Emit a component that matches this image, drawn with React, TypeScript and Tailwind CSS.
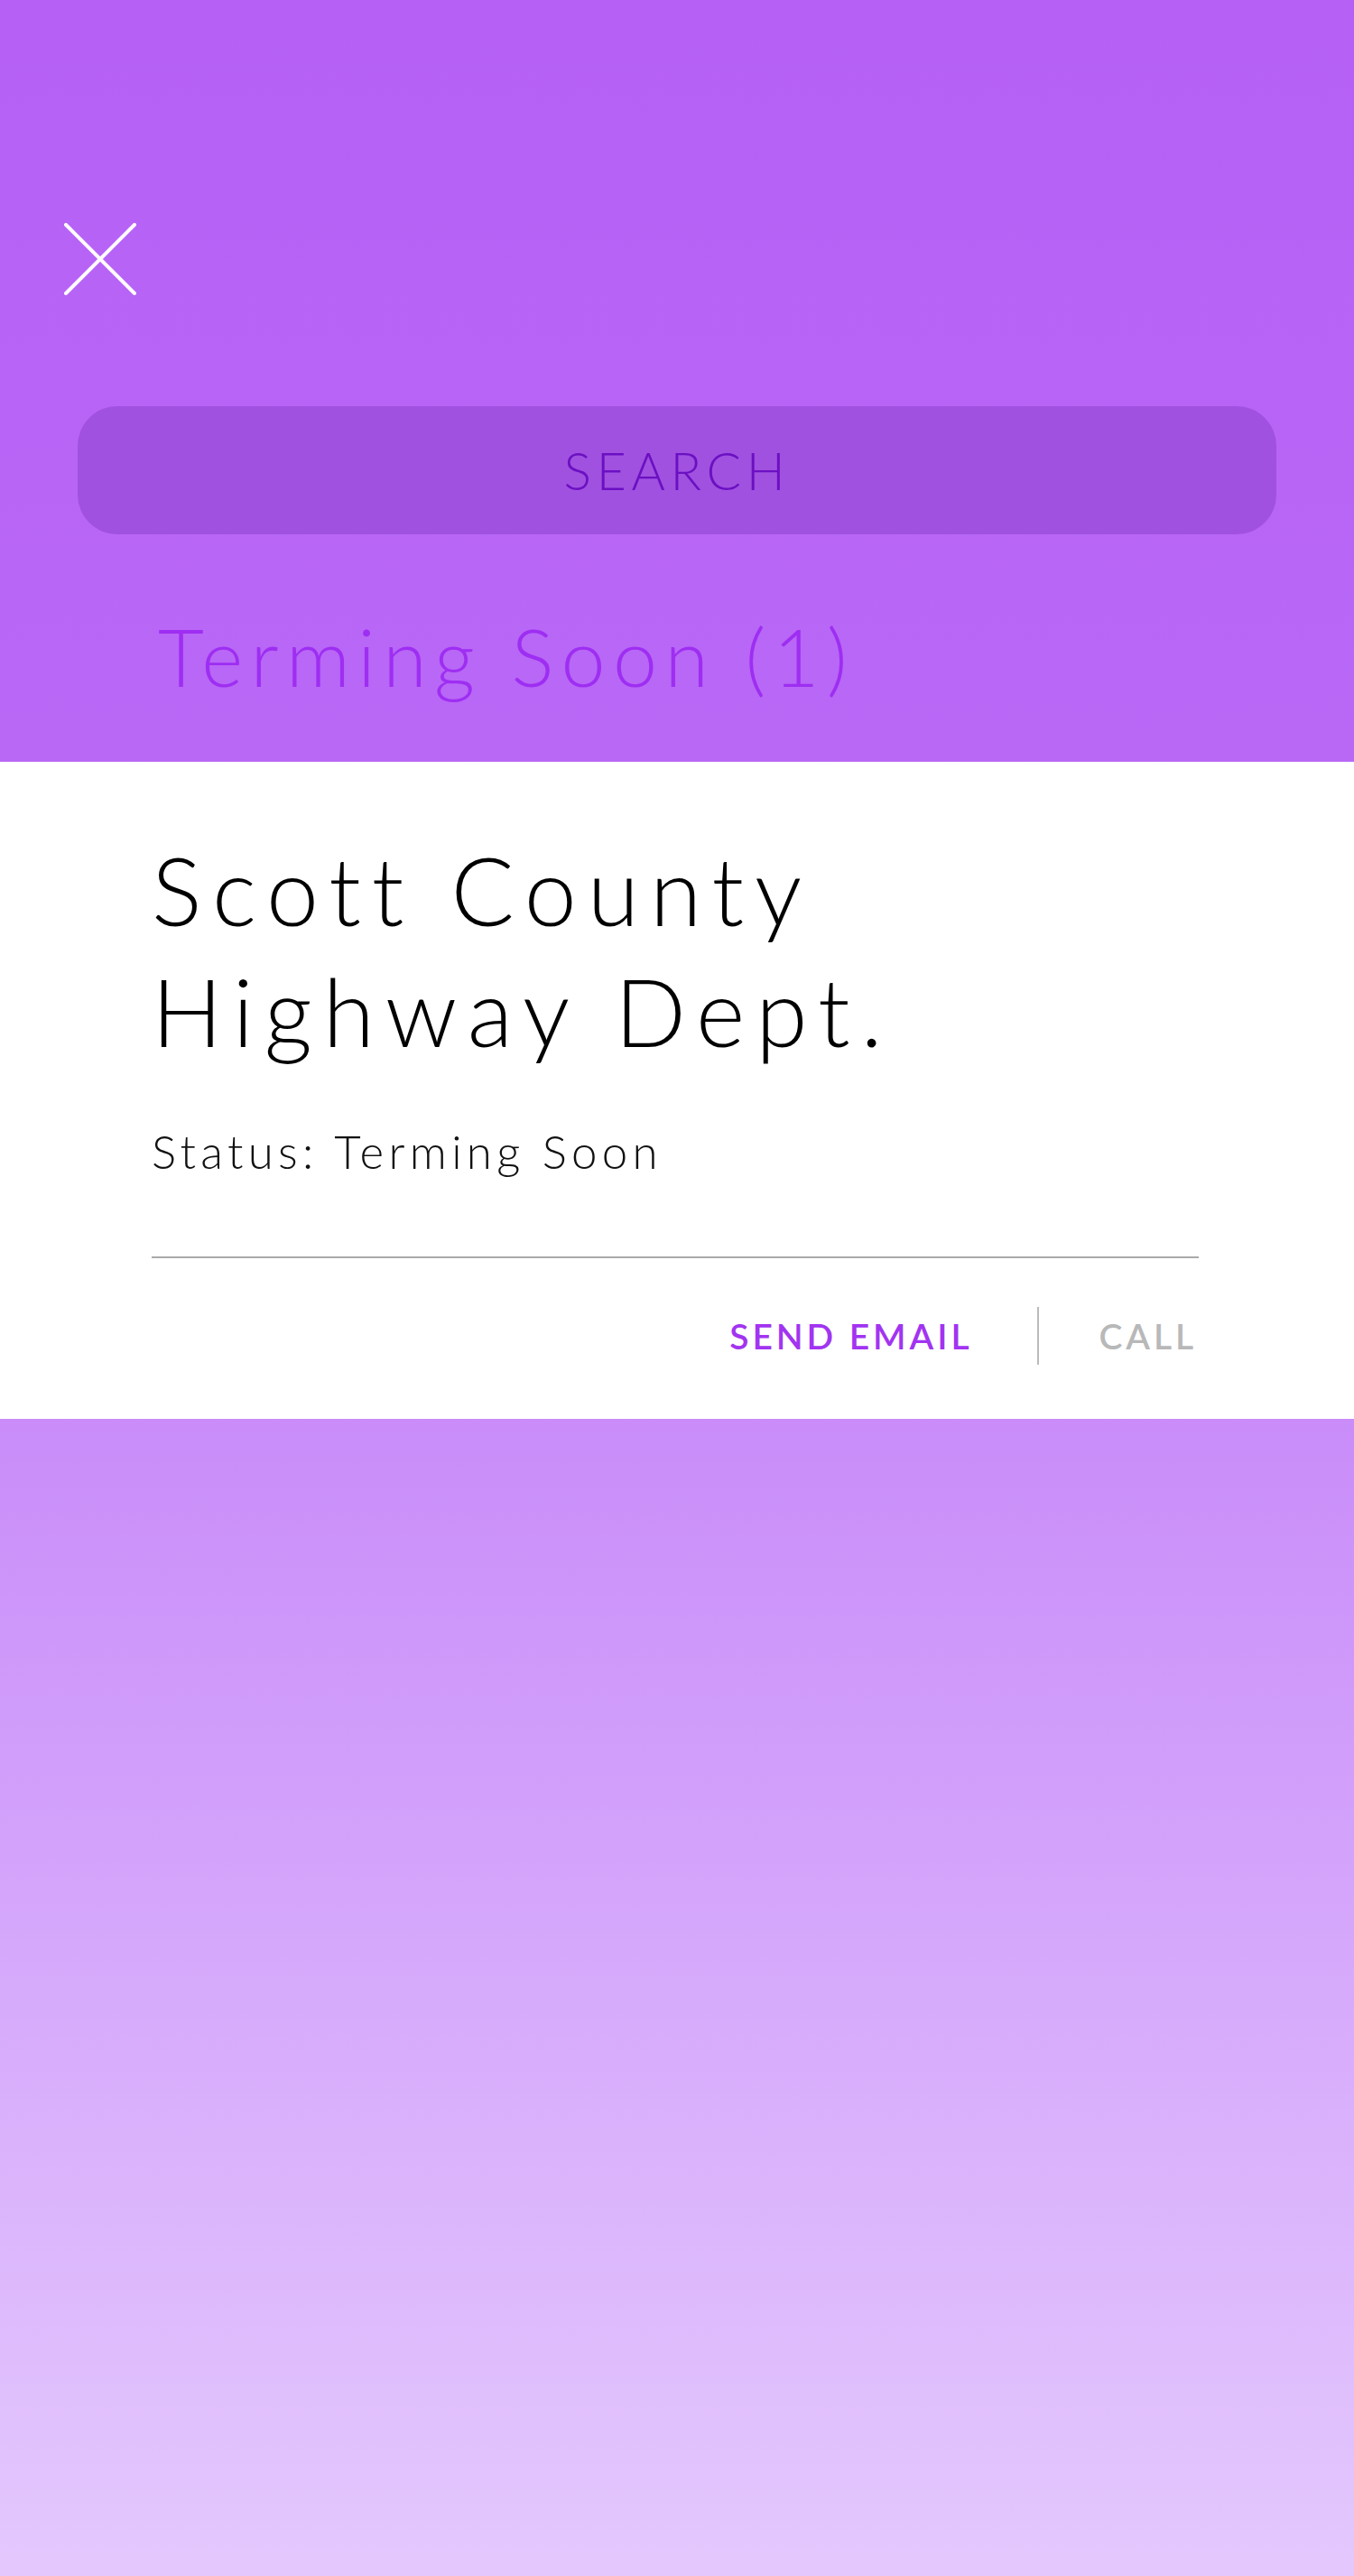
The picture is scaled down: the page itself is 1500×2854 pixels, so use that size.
export default function App() {
  return (
    <div className="w-[1500px] min-h-[2854px] flex flex-col font-['Lato',sans-serif]">
      {/* header */}
      <div className="h-[844px] flex flex-col bg-gradient-to-b from-[#b660f6] to-[#b968f6]">
        <div className="pl-[71px] pt-[247px]">
          <svg width="80" height="80" viewBox="0 0 80 80" fill="none">
            <line x1="2" y1="2" x2="78" y2="78" stroke="white" strokeWidth="4" strokeLinecap="round" />
            <line x1="78" y1="2" x2="2" y2="78" stroke="white" strokeWidth="4" strokeLinecap="round" />
          </svg>
        </div>

        <div className="mx-[86px] mt-[123px] h-[142px] rounded-[44px] bg-[#a051e0] flex items-center justify-center">
          <span className="text-[57px] leading-none font-light tracking-[0.1em] text-[#6b10c2]">SEARCH</span>
        </div>

        <h2 className="mt-[91px] pl-[175px] text-[88px] leading-[88px] font-light tracking-[0.095em] text-[#9e2ef2]">
          Terming Soon (1)
        </h2>
      </div>

      {/* card */}
      <div className="h-[728px] bg-white pl-[168px] pr-[172px] pt-[75px] flex flex-col">
        <h1 className="text-[104px] leading-[134px] font-light tracking-[0.115em] text-black">
          Scott County
          <br />
          Highway Dept.
        </h1>
        <p className="mt-[58px] text-[51px] leading-[61px] font-light tracking-[0.104em] text-[#111]">
          Status: Terming Soon
        </p>
        <div className="mt-[86px] h-[2px] bg-[#aaaaaa]" />
        <div className="mt-[54px] pr-[2px] flex items-center justify-end">
          <button className="text-[39px] leading-none font-semibold tracking-[0.1em] text-[#a234f1]">SEND EMAIL</button>
          <div className="ml-[72px] mr-[66px] w-[2px] h-[64px] bg-[#bbbbbb]" />
          <button className="text-[39px] leading-none font-semibold tracking-[0.1em] text-[#b8b8b8]">CALL</button>
        </div>
      </div>

      {/* backdrop */}
      <div className="flex-1 h-[1282px] bg-gradient-to-b from-[#c98cf9] to-[#e4c8fd]" />
    </div>
  )
}
